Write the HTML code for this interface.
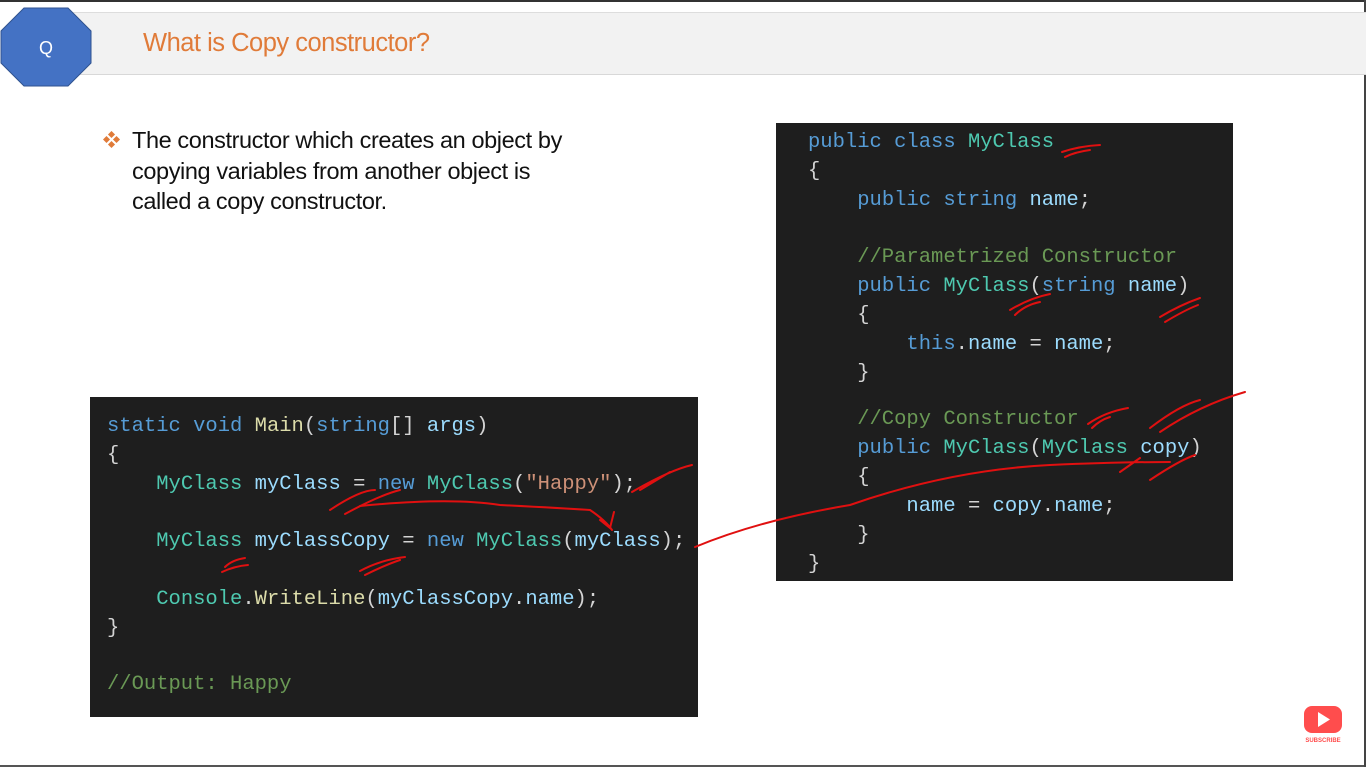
<!DOCTYPE html>
<html><head><meta charset="utf-8"><style>
*{margin:0;padding:0;box-sizing:border-box}
body{width:1366px;height:767px;background:#fff;position:relative;overflow:hidden;font-family:"Liberation Sans",sans-serif}
.top{position:absolute;left:0;top:0;width:1366px;height:2px;background:#333}
.bot{position:absolute;left:0;bottom:0;width:1366px;height:2px;background:#555}
.rb{position:absolute;right:0;top:0;width:2px;height:767px;background:#444}
.band{position:absolute;left:70px;top:12px;width:1296px;height:63px;background:#f2f2f2;border-top:1px solid #ddd;border-bottom:1px solid #d8d8d8}
.title{position:absolute;left:143px;top:29px;font-size:25.5px;color:#e07b39;letter-spacing:-0.5px}
.bul{position:absolute;left:132px;top:125px;font-size:23.5px;line-height:30.5px;color:#111;letter-spacing:-0.4px}
.box{position:absolute;background:#1e1e1e}
.c{position:absolute;font-family:"Liberation Mono",monospace;font-size:20.5px;white-space:pre;color:#d4d4d4;line-height:24px}
.k{color:#569cd6}.t{color:#4ec9b0}.m{color:#dcdcaa}.v{color:#9cdcfe}.s{color:#ce9178}.g{color:#6a9955}
</style></head><body>
<div class="top"></div><div class="bot"></div><div class="rb"></div>
<div class="band"></div>
<svg style="position:absolute;left:0;top:7px" width="92" height="80"><polygon points="24,1 68,1 91,24 91,56 68,79 24,79 1,56 1,24" fill="#4472c4" stroke="#2f528f" stroke-width="1"/><text x="46" y="47" font-family="Liberation Sans" font-size="18" fill="#fff" text-anchor="middle">Q</text></svg>
<div class="title">What is Copy constructor?</div>
<svg style="position:absolute;left:103px;top:131px" width="18" height="18"><g fill="#e07b39"><rect x="6" y="1" width="5" height="5" transform="rotate(45 8.5 3.5)"/><rect x="1" y="6" width="5" height="5" transform="rotate(45 3.5 8.5)"/><rect x="11" y="6" width="5" height="5" transform="rotate(45 13.5 8.5)"/><rect x="6" y="11" width="5" height="5" transform="rotate(45 8.5 13.5)"/></g></svg>
<div class="bul">The constructor which creates an object by<br>copying variables from another object is<br>called a copy constructor.</div>

<div class="box" style="left:90px;top:397px;width:608px;height:320px"></div>
<div class="c" style="left:107px;top:415px"><span class="k">static void</span> <span class="m">Main</span>(<span class="k">string</span>[] <span class="v">args</span>)</div>
<div class="c" style="left:107px;top:444px">{</div>
<div class="c" style="left:107px;top:473px">    <span class="t">MyClass</span> <span class="v">myClass</span> = <span class="k">new</span> <span class="t">MyClass</span>(<span class="s">"Happy"</span>);</div>
<div class="c" style="left:107px;top:530px">    <span class="t">MyClass</span> <span class="v">myClassCopy</span> = <span class="k">new</span> <span class="t">MyClass</span>(<span class="v">myClass</span>);</div>
<div class="c" style="left:107px;top:588px">    <span class="t">Console</span>.<span class="m">WriteLine</span>(<span class="v">myClassCopy</span>.<span class="v">name</span>);</div>
<div class="c" style="left:107px;top:617px">}</div>
<div class="c g" style="left:107px;top:673px">//Output: Happy</div>

<div class="box" style="left:776px;top:123px;width:457px;height:458px"></div>
<div class="c" style="left:808px;top:131px"><span class="k">public class</span> <span class="t">MyClass</span></div>
<div class="c" style="left:808px;top:160px">{</div>
<div class="c" style="left:808px;top:189px">    <span class="k">public string</span> <span class="v">name</span>;</div>
<div class="c g" style="left:808px;top:246px">    //Parametrized Constructor</div>
<div class="c" style="left:808px;top:275px">    <span class="k">public</span> <span class="t">MyClass</span>(<span class="k">string</span> <span class="v">name</span>)</div>
<div class="c" style="left:808px;top:304px">    {</div>
<div class="c" style="left:808px;top:333px">        <span class="k">this</span>.<span class="v">name</span> = <span class="v">name</span>;</div>
<div class="c" style="left:808px;top:362px">    }</div>
<div class="c g" style="left:808px;top:408px">    //Copy Constructor</div>
<div class="c" style="left:808px;top:437px">    <span class="k">public</span> <span class="t">MyClass</span>(<span class="t">MyClass</span> <span class="v">copy</span>)</div>
<div class="c" style="left:808px;top:466px">    {</div>
<div class="c" style="left:808px;top:495px">        <span class="v">name</span> = <span class="v">copy</span>.<span class="v">name</span>;</div>
<div class="c" style="left:808px;top:524px">    }</div>
<div class="c" style="left:808px;top:553px">}</div>

<svg style="position:absolute;left:0;top:0" width="1366" height="767" fill="none" stroke="#e01010" stroke-width="2" stroke-linecap="round">
<path d="M330 510 Q360 490 375 490 M345 514 Q380 495 400 490"/>
<path d="M360 506 Q450 497 500 505 Q560 508 590 510 Q605 520 612 530 M600 520 L610 528 L614 512"/>
<path d="M632 492 Q670 470 692 465 M640 490 Q660 478 670 472"/>
<path d="M225 567 Q232 560 245 558 M222 572 Q235 566 248 565"/>
<path d="M360 571 Q380 560 405 557 M365 575 Q385 565 400 560"/>
<path d="M695 547 Q760 520 850 505 Q950 470 1050 465 Q1120 462 1170 462 M1120 472 L1140 458 M1150 480 Q1180 460 1195 455"/>
<path d="M1062 152 Q1080 146 1100 145 M1065 157 Q1075 152 1090 150"/>
<path d="M1010 310 Q1030 298 1050 294 M1015 315 Q1025 305 1040 302"/>
<path d="M1160 317 Q1180 305 1200 298 M1165 322 Q1185 310 1198 305"/>
<path d="M1088 424 Q1105 412 1128 408 M1092 428 Q1100 420 1110 417"/>
<path d="M1150 428 Q1180 405 1200 400 M1160 432 Q1200 405 1245 392"/>
</svg>

<svg style="position:absolute;left:1303px;top:705px" width="40" height="40"><rect x="1" y="1" width="38" height="27" rx="8" fill="#ff4d4d"/><polygon points="15,7 15,22 27,14.5" fill="#fff"/><text x="20" y="37" font-family="Liberation Sans" font-size="6" font-weight="bold" fill="#ff4d4d" text-anchor="middle">SUBSCRIBE</text></svg>
</body></html>
